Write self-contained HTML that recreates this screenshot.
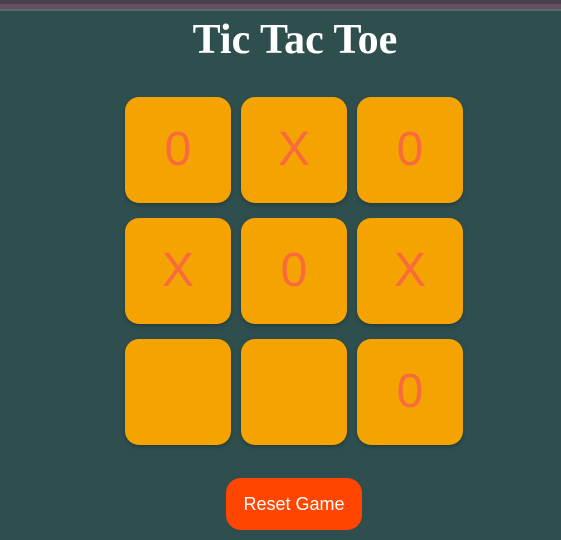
<!DOCTYPE html>
<html><head><style>
html,body{margin:0;padding:0;}
body{width:561px;height:540px;background:#2f4f4f;position:relative;overflow:hidden;font-family:"Liberation Sans",sans-serif;}
.bar1{position:absolute;left:0;top:0;width:561px;height:4px;background:#4b3f4b;}
.bar2{position:absolute;left:0;top:4px;width:561px;height:6px;background:#65505f;}
.bar3{position:absolute;left:0;top:9px;width:561px;height:2px;background:#5f6a6a;}
h1{position:absolute;left:0;width:590px;top:16px;margin:0;text-align:center;font-family:"Liberation Serif",serif;font-weight:bold;font-size:42px;color:#fff;line-height:48px;}
.c{position:absolute;width:106px;height:106px;background:#f5a300;border-radius:14px;box-shadow:0 2px 5px rgba(0,0,0,0.25);color:#f86b3c;font-size:48px;text-align:center;line-height:106px;}
.btn{position:absolute;left:226px;top:478px;width:136px;height:52px;background:#ff4500;border-radius:15px;color:#fff;font-size:18px;text-align:center;line-height:52px;}
</style></head><body>
<div class="bar1"></div><div class="bar2"></div><div class="bar3"></div>
<h1>Tic Tac Toe</h1>
<div class="c" style="left:125px;top:97px">0</div>
<div class="c" style="left:241px;top:97px">X</div>
<div class="c" style="left:357px;top:97px">0</div>
<div class="c" style="left:125px;top:218px">X</div>
<div class="c" style="left:241px;top:218px">0</div>
<div class="c" style="left:357px;top:218px">X</div>
<div class="c" style="left:125px;top:339px"></div>
<div class="c" style="left:241px;top:339px"></div>
<div class="c" style="left:357px;top:339px">0</div>
<div class="btn">Reset Game</div>
</body></html>
